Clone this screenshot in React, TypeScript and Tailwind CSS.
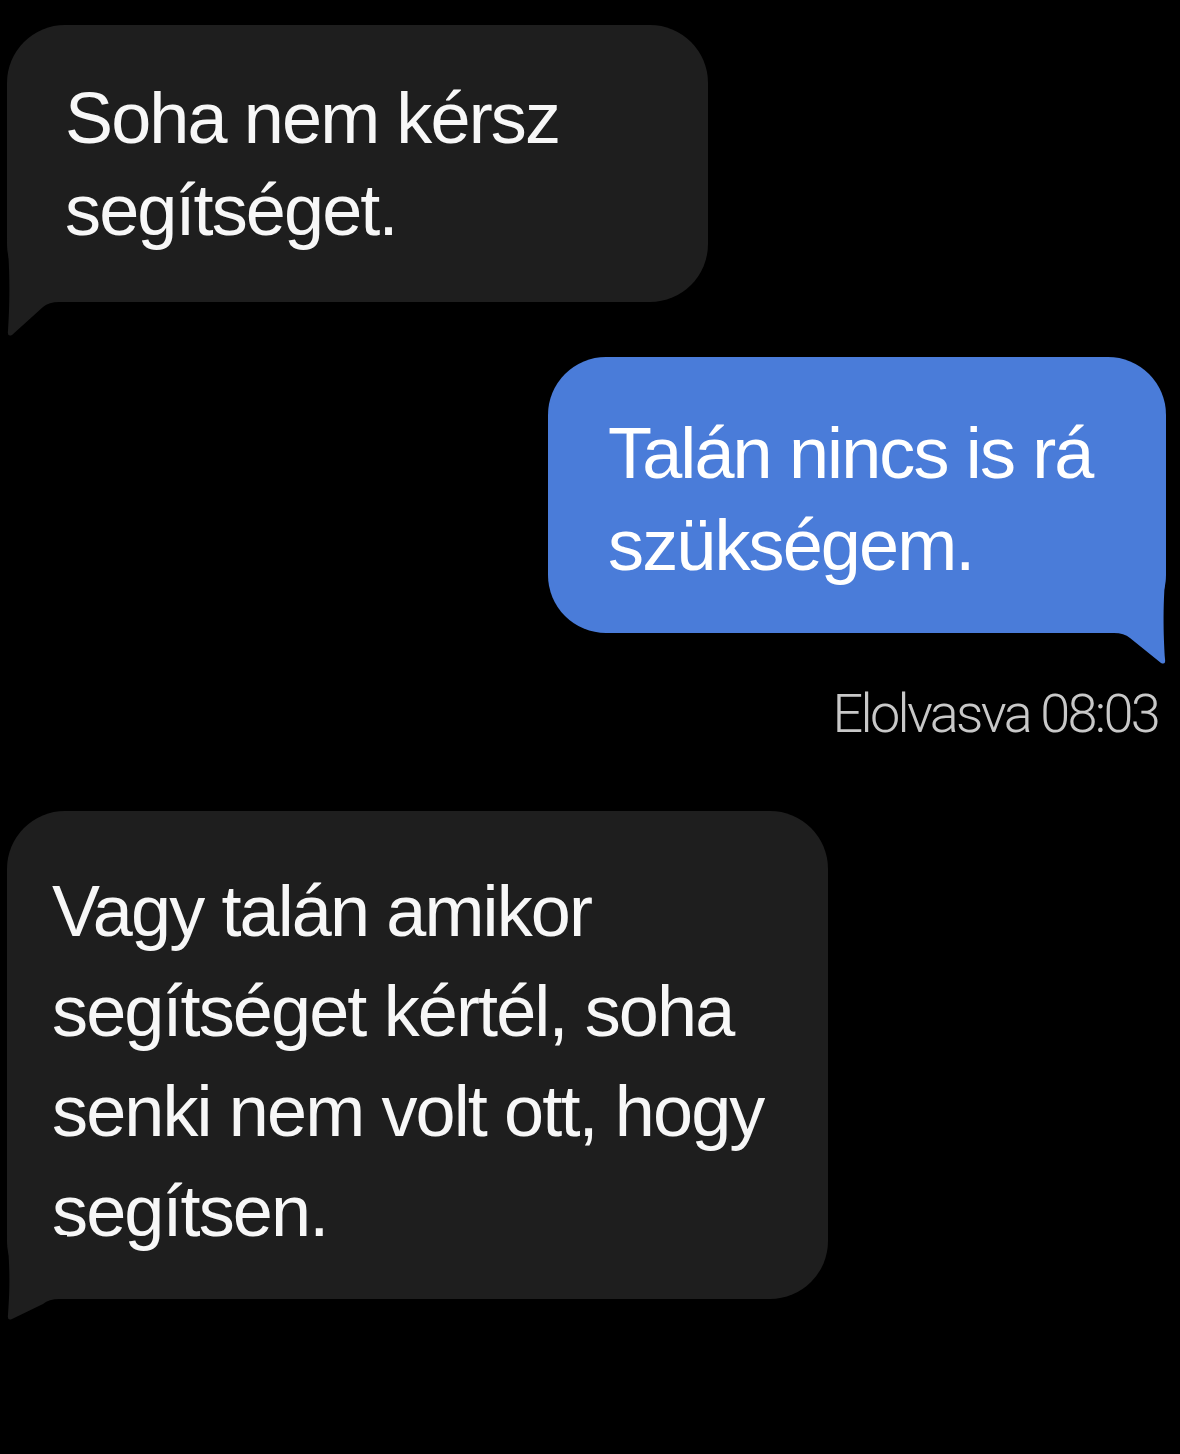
const bubbleFont = { fontFamily: "'Liberation Sans', Arial, sans-serif" };

function Tail({ drop, side, color }: { drop: number; side: "left" | "right"; color: string }) {
  const h = 64 + drop;
  const d = `M0,0 H60 V64 H52 Q42,64 36,69 L5,${h - 2} Q0,${h} 1,${h - 6} C2,${h - 22} 4,40 0,0 Z`;
  return (
    <svg
      width={60}
      height={h}
      viewBox={`0 0 60 ${h}`}
      className={
        side === "left"
          ? "absolute left-0 top-full -translate-y-[64px]"
          : "absolute right-0 top-full -translate-y-[64px] -scale-x-100"
      }
    >
      <path d={d} fill={color} />
    </svg>
  );
}

export default function App() {
  return (
    <div className="w-[1180px] h-[1454px] bg-black flex flex-col overflow-hidden" style={bubbleFont}>
      {/* incoming */}
      <div className="relative ml-[7px] mt-[25px] w-[701px] h-[277px] rounded-[58px] bg-[#1e1e1e] pl-[58px] pt-[47px]">
        <div className="text-[72px] leading-[92px] tracking-[-0.026em] text-[#f7f7f7]">
          <div>Soha nem kérsz</div>
          <div>segítséget.</div>
        </div>
        <Tail drop={35} side="left" color="#1e1e1e" />
      </div>

      {/* outgoing */}
      <div className="relative self-end mr-[14px] mt-[55px] w-[618px] h-[276px] rounded-[58px] bg-[#4a7cd9] pl-[60px] pt-[50px]">
        <div className="text-[72px] leading-[92px] tracking-[-0.026em] text-white">
          <div>Talán nincs is rá</div>
          <div>szükségem.</div>
        </div>
        <Tail drop={32} side="right" color="#4a7cd9" />
      </div>

      <div className="self-end mr-[22px] mt-[51px] font-['Roboto'] font-light text-[54px] leading-[60px] tracking-[-0.05em] text-[#c8c8c8]">
        Elolvasva 08:03
      </div>

      {/* incoming */}
      <div className="relative ml-[7px] mt-[67px] w-[821px] h-[488px] rounded-[58px] bg-[#1e1e1e] pl-[45px] pt-[50px]">
        <div className="text-[72px] leading-[100px] tracking-[-0.026em] text-[#f7f7f7]">
          <div>Vagy talán amikor</div>
          <div>segítséget kértél, soha</div>
          <div>senki nem volt ott, hogy</div>
          <div>segítsen.</div>
        </div>
        <Tail drop={22} side="left" color="#1e1e1e" />
      </div>
    </div>
  );
}
